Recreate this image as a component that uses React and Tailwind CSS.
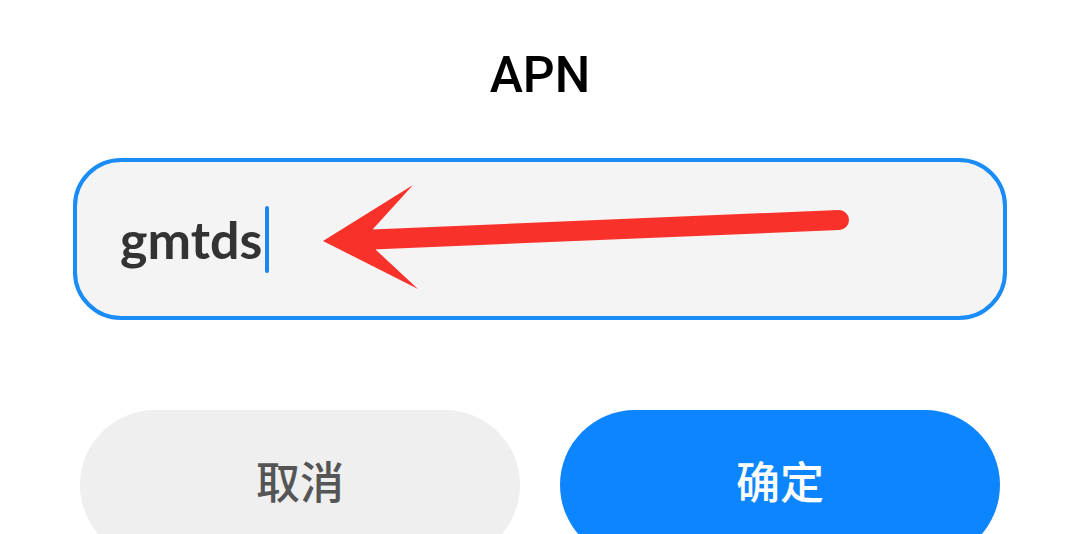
import React from "react";

// APN edit dialog with annotation arrow
const Arrow = () => (
  <svg
    className="absolute inset-0 pointer-events-none"
    width="1080"
    height="534"
    viewBox="0 0 1080 534"
  >
    <line x1="372" y1="239.5" x2="839" y2="220" stroke="#f8322b" strokeWidth="20" strokeLinecap="round" />
    <polygon points="323,241 413,185 373,229 376,250 418,289" fill="#f8322b" />
  </svg>
);

export default function App() {
  return (
    <div className="relative h-[534px] w-[1080px] overflow-hidden bg-white">
      <div className="pt-[50px] text-center font-['Roboto',sans-serif] text-[50px] font-medium leading-none text-black">
        APN
      </div>

      {/* Input */}
      <div className="mt-[58px] px-[73px]">
        <div className="flex h-[162px] items-center rounded-[48px] border-4 border-[#1a8cf6] bg-[#f4f4f4] pl-[43px]">
          <span className="font-['Lato',sans-serif] text-[52px] font-bold leading-none text-[#333]">
            gmtds
          </span>
          <span className="ml-[3px] h-[67px] w-[4px] rounded-full bg-[#1a86f2]" />
        </div>
      </div>

      {/* Buttons */}
      <div className="mt-[90px] flex gap-[40px] px-[80px]">
        <button className="flex h-[150px] flex-1 items-center justify-center rounded-full bg-[#efefef] pb-[10px] font-['Noto_Sans_CJK_SC',sans-serif] text-[44px] font-medium text-[#555]">
          取消
        </button>
        <button className="flex h-[150px] flex-1 items-center justify-center rounded-full bg-[#0d85ff] pb-[10px] font-['Noto_Sans_CJK_SC',sans-serif] text-[44px] font-medium text-white">
          确定
        </button>
      </div>

      <Arrow />
    </div>
  );
}
